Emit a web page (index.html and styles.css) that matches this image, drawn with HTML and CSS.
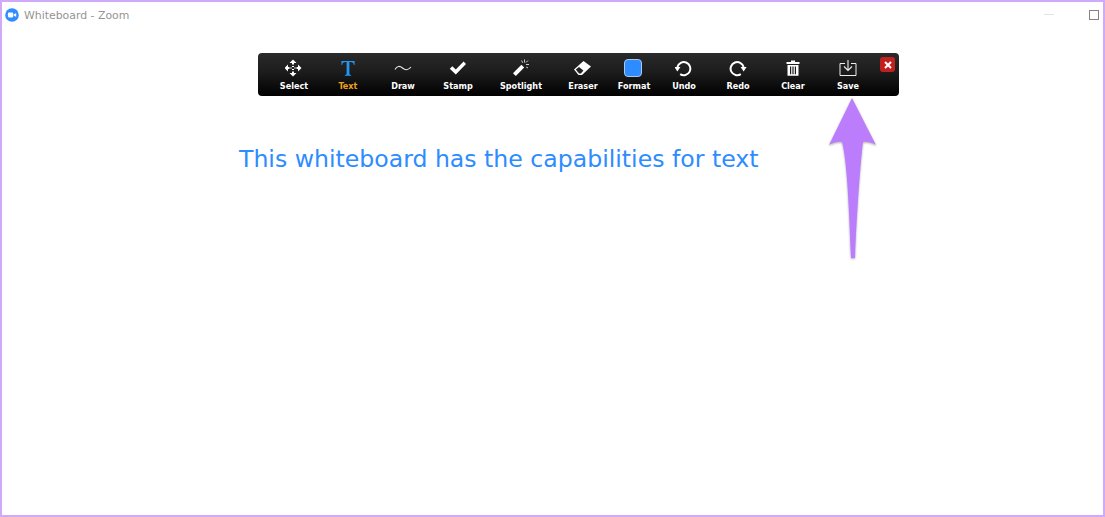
FILE: index.html
```html
<!DOCTYPE html>
<html lang="en">
<head>
<meta charset="utf-8">
<title>Whiteboard - Zoom</title>
<link rel="stylesheet" href="styles.css">
</head>
<body>
<div class="window">
  <header class="titlebar">
    <svg class="app-icon" viewBox="0 0 14 14" width="14" height="14">
      <circle cx="7" cy="7" r="6.8" fill="#2d8cff"/>
      <rect x="2.900" y="4.600" width="5.400" height="4.800" rx="1.100" fill="#fff"/>
      <path d="M8.800 6.600 L11.200 4.900 V9.100 L8.800 7.400 Z" fill="#fff"/>
    </svg>
    <span class="title">Whiteboard - Zoom</span>
    <span class="min-btn"></span>
    <span class="max-btn"></span>
  </header>
  <main class="board">
    <nav class="toolbar">
      <div class="tool w54">
        <svg class="icon" viewBox="1 0 18 18"><path d="M9 0.500 L12.500 4 H10 V5.500 H8 V4 H5.500 Z M9 17.500 L12.500 14 H10 V12.500 H8 V14 H5.500 Z M0.500 9 L4 5.500 V8 H5.500 V10 H4 V12.500 Z M17.500 9 L14 5.500 V8 H12.500 V10 H14 V12.500 Z M8 7 H10 V8 H8 Z M8 10 H10 V11 H8 Z M6.500 8.300 H7.500 V9.700 H6.500 Z M10.500 8.300 H11.500 V9.700 H10.500 Z" fill="#fff"/></svg>
        <span class="label">Select</span>
      </div>
      <div class="tool w54">
        <svg class="icon" viewBox="0 0 18 18"><path d="M2.400 2 H15.600 V6 H14.900 C14.600 3.900 13.600 3.100 11.600 3.100 H10.400 V14.600 C10.400 15.600 10.900 15.900 12.100 16 V16.800 H5.900 V16 C7.100 15.900 7.600 15.600 7.600 14.600 V3.100 H6.400 C4.400 3.100 3.400 3.900 3.100 6 H2.400 Z" fill="#2196f3"/></svg>
        <span class="label active">Text</span>
      </div>
      <div class="tool w56">
        <svg class="icon" viewBox="0 0 18 18"><path d="M1 10.500 C3 6.500 6 6.800 8.500 9 C11 11.200 14 11.600 17 8" fill="none" stroke="#e8e8e8" stroke-width="1.100"/></svg>
        <span class="label">Draw</span>
      </div>
      <div class="tool w54">
        <svg class="icon" viewBox="0 0 18 18"><path d="M0.800 9.800 L3.300 7.300 L6.800 10.600 L14.600 2.500 L17 4.900 L6.800 15.500 Z" fill="#fff"/></svg>
        <span class="label">Stamp</span>
      </div>
      <div class="tool w72">
        <svg class="icon" viewBox="0 0 18 18"><path d="M1 14.200 L9.400 5.800 L12.200 8.600 L3.800 17 Z" fill="#fff"/><path d="M12.500 0.500 V3.500 M17 5.500 H14 M16 1.500 L14 3.500 M9.500 1.500 L10.800 3.800 M16 9 L14.200 8" stroke="#ccc" stroke-width="1" fill="none"/></svg>
        <span class="label">Spotlight</span>
      </div>
      <div class="tool w52">
        <svg class="icon" viewBox="1 0 18 18"><path d="M1 10.500 L10.500 2 L18 7.500 L9 16 H5.500 Z" fill="#fff"/><path d="M2.800 10.600 L6 8 L10.400 11.400 L8 14.600 H6 Z" fill="#222"/></svg>
        <span class="label">Eraser</span>
      </div>
      <div class="tool w50">
        <span class="swatch"></span>
        <span class="label">Format</span>
      </div>
      <div class="tool w50">
        <svg class="icon" viewBox="1 0 18 18"><path d="M3.400 8 A6.600 6.600 0 1 1 6.200 15.200" fill="none" stroke="#fff" stroke-width="2"/><path d="M0.400 8 H6.400 L3.400 12.400 Z" fill="#fff"/></svg>
        <span class="label">Undo</span>
      </div>
      <div class="tool w58">
        <svg class="icon" viewBox="0 0 18 18"><path d="M14.600 8 A6.600 6.600 0 1 0 11.800 15.200" fill="none" stroke="#fff" stroke-width="2"/><path d="M17.600 8 H11.600 L14.600 12.400 Z" fill="#fff"/></svg>
        <span class="label">Redo</span>
      </div>
      <div class="tool w52">
        <svg class="icon" viewBox="0 0 18 18"><path d="M7 1.500 H11 V3 H15.500 V5 H2.500 V3 H7 Z" fill="#fff"/><path d="M3.500 6 H14.500 V16.800 H3.500 Z M6 7.500 V15.300 H7.200 V7.500 Z M8.400 7.500 V15.300 H9.600 V7.500 Z M10.800 7.500 V15.300 H12 V7.500 Z" fill="#fff" fill-rule="evenodd"/></svg>
        <span class="label">Clear</span>
      </div>
      <div class="tool w58">
        <svg class="icon" viewBox="0 0 18 18"><path d="M6 4.500 H1 V16.500 H17 V4.500 H12" fill="none" stroke="#eee" stroke-width="1"/><path d="M9 1 V11 M5 7.500 L9 11.500 L13 7.500" fill="none" stroke="#eee" stroke-width="1.100"/></svg>
        <span class="label">Save</span>
      </div>
      <span class="close">
        <svg viewBox="0 0 8 8" width="8" height="8"><path d="M1 1 L7 7 M7 1 L1 7" stroke="#fff" stroke-width="2"/></svg>
      </span>
    </nav>
    <p class="note">This whiteboard has the capabilities for text</p>
    <svg class="arrow" viewBox="0 0 50 170" width="50" height="170">
      <defs>
        <filter id="soft" x="-20%" y="-10%" width="140%" height="120%">
          <feDropShadow dx="0" dy="1" stdDeviation="1" flood-color="#777" flood-opacity="0.6"/>
        </filter>
      </defs>
      <path d="M24 2 L48 49 C43 46 38 45.500 35 46 C33 62 29 110 27 162 L23 162 C21 110 19 64 14 46 C11 45.500 6 46 1 49 Z" fill="#bb7dfb" filter="url(#soft)"/>
    </svg>
  </main>
</div>
</body>
</html>
```
FILE: styles.css
```css
* { box-sizing: border-box; }
html, body { margin: 0; height: 100%; background: #fff; }
.window {
  position: relative;
  width: 1105px;
  height: 517px;
  border: 2px solid #d0aaf9;
  background: #fff;
  display: flex;
  flex-direction: column;
  overflow: hidden;
}
.titlebar {
  height: 27px;
  display: flex;
  align-items: center;
  padding: 0 4px 0 3px;
  flex: none;
}
.app-icon { flex: none; margin-bottom: 2px; }
.title {
  margin-left: 5px;
  font: 10.900px "DejaVu Sans", sans-serif;
  color: #949494;
  flex: 1;
}
.min-btn {
  width: 10px;
  height: 1px;
  background: #e4e4e4;
  margin-right: 35px;
  margin-bottom: 2px;
}
.max-btn {
  width: 10px;
  height: 10px;
  margin-bottom: 2px;
  border: 1px solid #8a8080;
}
.board {
  flex: 1;
  padding: 24px 0 0 256px;
}
.toolbar {
  position: relative;
  width: 641px;
  height: 43px;
  display: flex;
  padding-left: 9px;
  border-radius: 4px;
  background: linear-gradient(#2a2a2a, #1c1c1c 45%, #000);
}
.tool {
  display: flex;
  flex-direction: column;
  align-items: center;
  padding-top: 6px;
}
.w50 { width: 50px; }
.w52 { width: 52px; }
.w54 { width: 54px; }
.w56 { width: 56px; }
.w58 { width: 58px; }
.w72 { width: 72px; }
.icon {
  width: 18px;
  height: 18px;
  display: block;
}
.swatch {
  width: 18px;
  height: 18px;
  margin-right: 2px;
  border-radius: 4px;
  background: #2d8cff;
  border: 1px solid #a9c8ea;
}
.label {
  margin-top: 2px;
  font: bold 9px/14px "DejaVu Sans Condensed", "DejaVu Sans", sans-serif;
  font-stretch: condensed;
  color: #fff;
  white-space: nowrap;
}
.label.active { color: #f0a020; }
.close {
  position: absolute;
  left: 622px;
  top: 4px;
  width: 15px;
  height: 15px;
  border-radius: 3px;
  background: #c2201f;
  display: flex;
  align-items: center;
  justify-content: center;
}
.note {
  margin: 48px 0 0 -19px;
  font: 23.600px/30px "DejaVu Sans", sans-serif;
  color: #2d8cff;
  white-space: nowrap;
}
.arrow {
  position: absolute;
  left: 826px;
  top: 94px;
}
```
